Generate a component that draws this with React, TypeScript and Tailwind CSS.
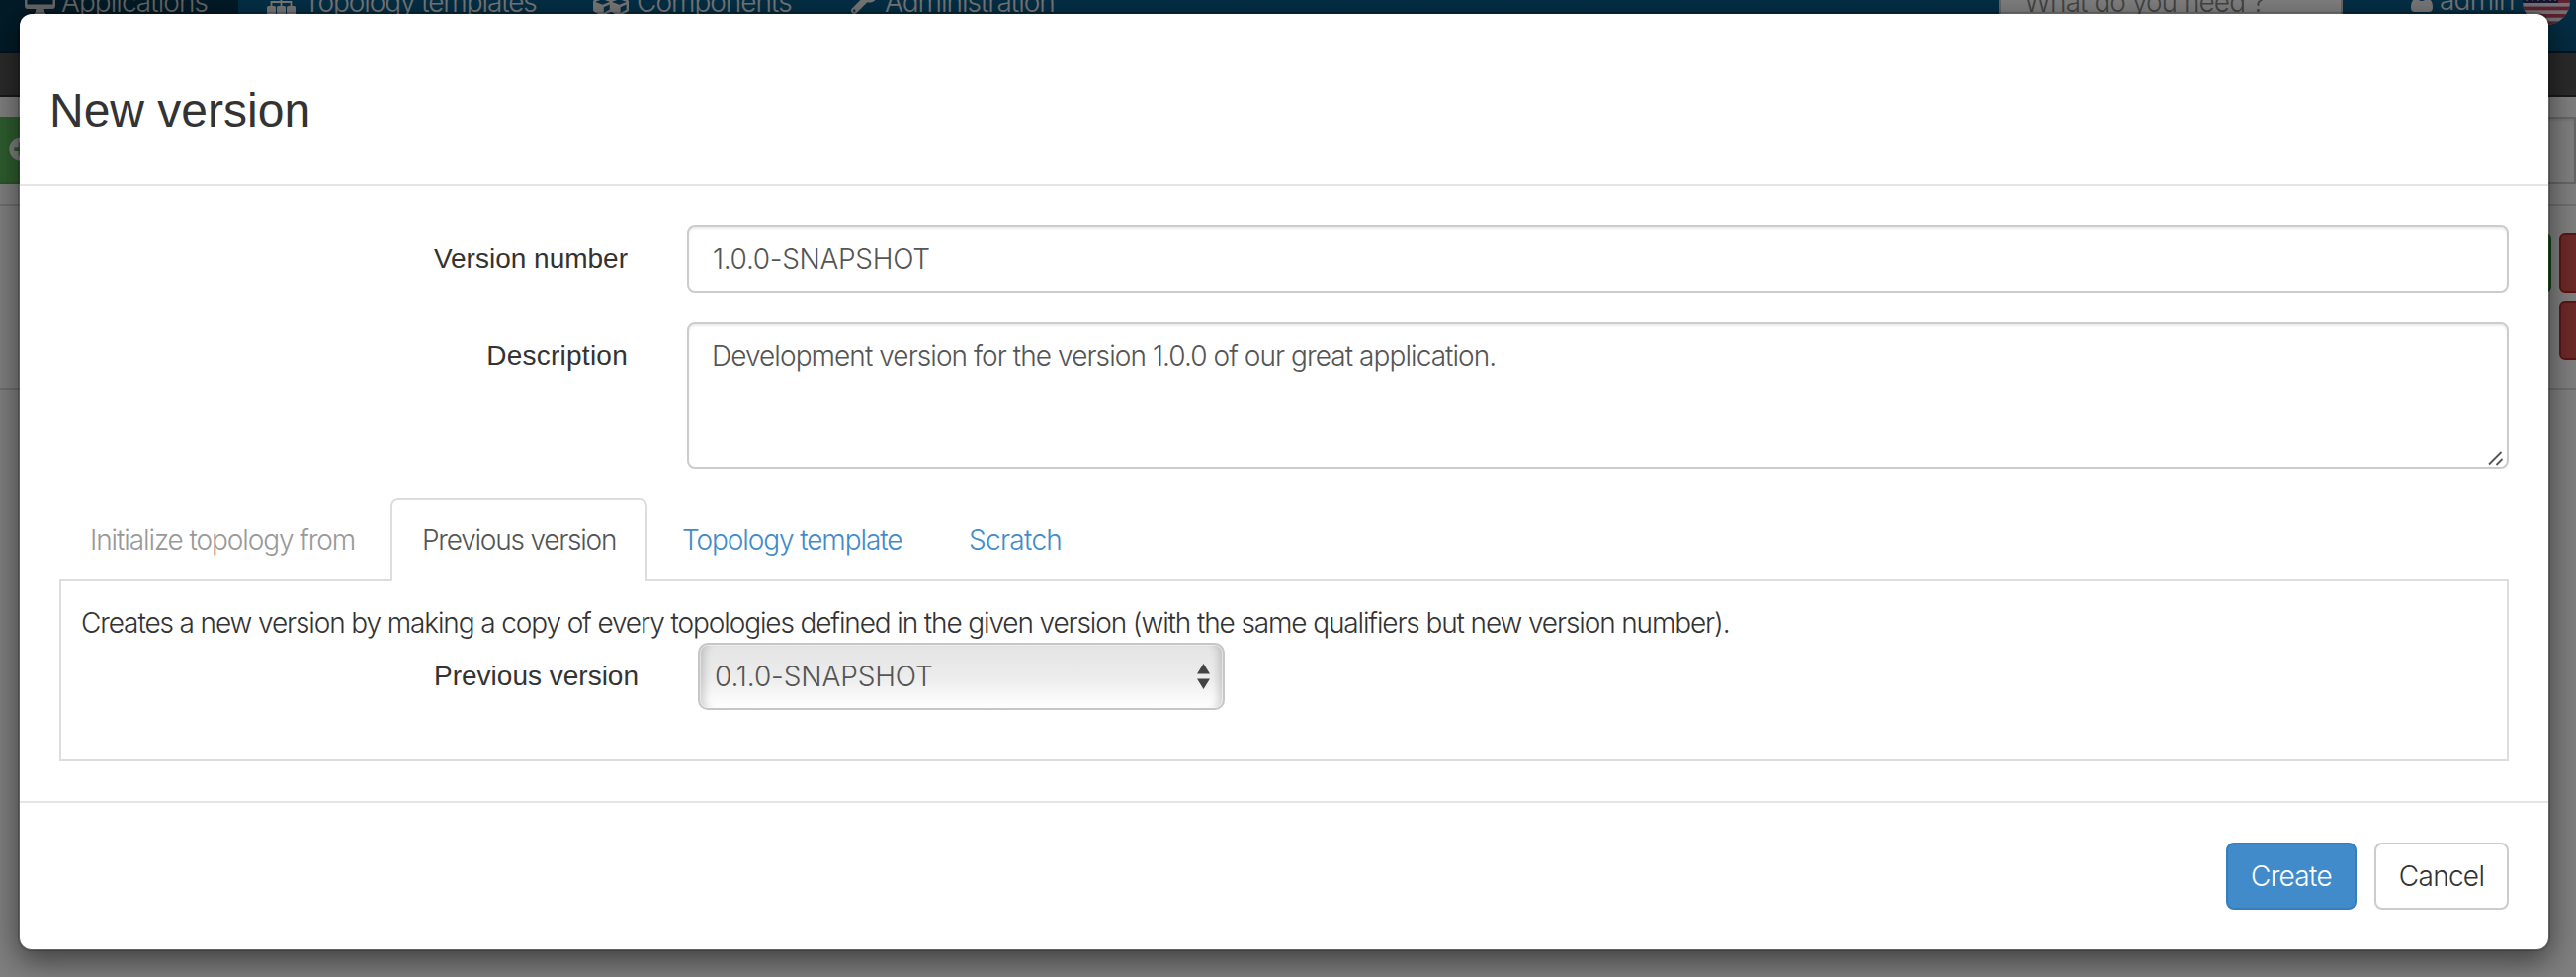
import { FaCubes, FaWrench, FaPlusCircle } from "react-icons/fa";
import type { ReactNode } from "react";

const light = "font-['Inter','Liberation_Sans',sans-serif] font-light";
const regular = "font-['Liberation_Sans',sans-serif]";

function DesktopIcon() {
  return (
    <svg className="mr-[6px] h-[36px] w-[31px]" viewBox="0 0 31 36" fill="currentColor">
      <path
        fillRule="evenodd"
        d="M3 2h25a3 3 0 0 1 3 3v17a3 3 0 0 1-3 3H3a3 3 0 0 1-3-3V5a3 3 0 0 1 3-3zM2.500 4.500v16h26v-16z"
      />
      <path d="M11.500 25h8l1 4 2 2h-14l2-2z" />
    </svg>
  );
}

function SitemapIcon() {
  return (
    <svg className="mr-[8px] h-[36px] w-[29px]" viewBox="0 0 29 36" fill="currentColor">
      <rect x="10" y="4" width="9" height="9" rx="1.500" />
      <rect x="0" y="22" width="9" height="9" rx="1.500" />
      <rect x="10" y="22" width="9" height="9" rx="1.500" />
      <rect x="20" y="22" width="9" height="9" rx="1.500" />
      <path d="M4.500 22v-4h20v4M14.500 12v10" fill="none" stroke="currentColor" strokeWidth="1.800" />
    </svg>
  );
}

function UserIcon() {
  return (
    <svg className="mr-[7px] -mt-[4px] h-[24px] w-[22px]" viewBox="0 0 22 24" fill="currentColor">
      <circle cx="11" cy="6" r="6" />
      <path d="M6 10.500Q0 11 0 19.500 0 24 4 24h14q4 0 4-4.500 0-8.500-6-9-5 5-10 0z" />
    </svg>
  );
}

function FlagIcon() {
  return (
    <svg className="-mt-[2px] ml-[8px] size-12" viewBox="0 0 48 48">
      <clipPath id="flag">
        <circle cx="24" cy="24" r="24" />
      </clipPath>
      <g clipPath="url(#flag)">
        <rect width="48" height="48" fill="#e6e6ee" />
        {[0, 7.4, 14.8, 22.2, 29.6, 37, 44.4].map((y) => (
          <rect key={y} y={y} width="48" height="3.700" fill="#c0405a" />
        ))}
        <rect width="36" height="26" fill="#2a2a60" />
        {[4, 10, 16, 22, 28, 33].map((x) => (
          <circle key={x} cx={x} cy="23" r="1" fill="#b0b0d0" />
        ))}
      </g>
    </svg>
  );
}

function Navbar() {
  return (
    <header
      className={`-mt-[48px] flex h-[102px] shrink-0 items-center whitespace-nowrap border-b-2 border-[#04283c] bg-linear-to-b from-[#0a6698] to-[#08557f] text-[28px] leading-10 tracking-[-1.1px] text-[#eeeeee] ${light}`}
    >
      <div className="flex h-full w-[241px] items-center bg-[#04364f] pl-[25px] tracking-[-0.95px] text-[#cccccc]">
        <DesktopIcon />
        <span>Applications</span>
      </div>
      <div className="flex w-[330px] items-center pl-[29px]">
        <SitemapIcon />
        <span>Topology templates</span>
      </div>
      <div className="flex w-[261px] items-center pl-[29px] tracking-[-1px]">
        <FaCubes className="-mt-[4px] mr-[8px] size-[36px]" />
        <span>Components</span>
      </div>
      <div className="flex items-center pl-[29px] tracking-[-1px]">
        <FaWrench className="-mt-[2px] mr-[8px] size-[26px]" />
        <span>Administration</span>
      </div>
      <div className="ml-auto flex h-[68px] w-[348px] items-center border-2 border-[#cccccc] bg-white px-[24px] tracking-[-0.95px] text-[#888888]">
        What do you need ?
      </div>
      <div className="ml-[69px] flex w-[167px] items-center">
        <UserIcon />
        <span className="-mt-[4px] tracking-[-0.8px]">admin</span>
        <FlagIcon />
      </div>
    </header>
  );
}

function Backdrop() {
  return (
    <div className={`flex h-full flex-col bg-white ${regular}`}>
      <Navbar />
      <div className="h-[44px] shrink-0 border-b-2 border-[#333333] bg-[#555555]" />
      <div className="flex h-[110px] shrink-0 items-center justify-between border-b-2 border-[#dddddd]">
        <div className="flex h-[68px] w-[120px] items-center border-b-2 border-[#4cae4c] bg-[#5cb85c] pl-[9px] text-white">
          <FaPlusCircle className="size-6" />
        </div>
        <div className="h-[68px] w-[300px] border-2 border-[#cccccc] shadow-[inset_0_2px_2px_rgba(0,0,0,0.075)]" />
      </div>
      <div className="flex h-[186px] shrink-0 justify-end gap-[8px] border-b-2 border-[#dddddd] pt-[28px]">
        <div className="h-[60px] w-[60px] rounded-[6px] border-2 border-[#398439] bg-[#449d44]" />
        <div className="-mr-[20px] flex flex-col gap-[8px]">
          <div className="h-[60px] w-[37px] rounded-[6px] border-2 border-[#b52b27] bg-[#d9534f]" />
          <div className="h-[60px] w-[37px] rounded-[6px] border-2 border-[#b52b27] bg-[#d9534f]" />
        </div>
      </div>
    </div>
  );
}

function Label({ children }: { children: ReactNode }) {
  return <label className={`pt-[14px] text-right tracking-normal text-[#333333] ${regular}`}>{children}</label>;
}

function Dialog() {
  return (
    <section
      className={`w-[2562px] rounded-[14px] border-2 border-black/20 bg-white bg-clip-padding text-[28px] leading-10 tracking-[-1.1px] shadow-[0_10px_30px_rgba(0,0,0,0.5)] ${light}`}
    >
      <header className="h-[174px] border-b-2 border-[#e5e5e5] pl-[30px] pt-[64px]">
        <h1 className={`text-[48px] leading-[68px] tracking-normal text-[#333333] ${regular}`}>New version</h1>
      </header>

      <div className="h-[624px] border-b-2 border-[#e5e5e5] px-[40px] pt-[40px]">
        <div className="grid grid-cols-[575px_1fr] gap-x-[60px] gap-y-[30px]">
          <Label>Version number</Label>
          <div className="h-[68px] rounded-[8px] border-2 border-[#cccccc] px-[24px] py-[12px] tracking-[-0.3px] text-[#555555] shadow-[inset_0_2px_2px_rgba(0,0,0,0.075)]">
            1.0.0-SNAPSHOT
          </div>
          <Label>
            <span className="tracking-[0.25px]">Description</span>
          </Label>
          <div className="relative h-[148px] rounded-[8px] border-2 border-[#cccccc] px-[23px] py-[12px] tracking-[-0.93px] text-[#555555] shadow-[inset_0_2px_2px_rgba(0,0,0,0.075)]">
            Development version for the version 1.0.0 of our great application.
            <svg
              className="absolute bottom-px right-[3px] size-[17px]"
              viewBox="0 0 17 17"
              fill="none"
              stroke="#555555"
              strokeWidth="1.800"
            >
              <path d="M2 15.500 14.500 3M9.500 16l6-6" />
            </svg>
          </div>
        </div>

        <nav className="mt-[30px] flex h-[84px] border-b-2 border-[#dddddd]">
          <span className="w-[335px] pl-[31px] pt-[22px] tracking-[-1.1px] text-[#999999]">Initialize topology from</span>
          <span className="h-[84px] w-[260px] rounded-t-[8px] border-2 border-b-0 border-[#dddddd] bg-white pl-[30px] pt-[20px] tracking-[-1.22px] text-[#555555]">
            Previous version
          </span>
          <span className="w-[290px] pl-[35px] pt-[22px] text-[#428bca]">Topology template</span>
          <span className="pl-[35px] pt-[22px] tracking-[-0.7px] text-[#428bca]">Scratch</span>
        </nav>
        <div className="h-[182px] border-2 border-t-0 border-[#dddddd] px-[20px] pt-[22px] text-[#333333]">
          <p className="tracking-[-1.12px]">
            Creates a new version by making a copy of every topologies defined in the given version (with the same qualifiers
            but new version number).
          </p>
          <div className="grid grid-cols-[564px_533px] gap-x-[60px]">
            <Label>Previous version</Label>
            <div className="flex h-[68px] items-center justify-between rounded-[10px] border-2 border-[#c6c6c6] bg-linear-to-b from-[#e4e4e4] via-[#ececec] to-white pl-[15px] pr-[13px] tracking-[-0.1px] text-[#555555] shadow-[inset_0_0_0_1px_rgba(255,255,255,0.5),inset_10px_0_8px_-6px_rgba(0,0,0,0.18),inset_-10px_0_8px_-6px_rgba(0,0,0,0.18)]">
              0.1.0-SNAPSHOT
              <svg width="13" height="26" viewBox="0 0 13 26" fill="#444444">
                <path d="M0 10.500 6.500 0 13 10.500zM0 15.500h13L6.500 26z" />
              </svg>
            </div>
          </div>
        </div>
      </div>

      <footer className="flex h-[148px] justify-end gap-[18px] px-[40px] pt-[40px] tracking-[-0.7px]">
        <button className="flex h-[68px] w-[132px] items-center justify-center rounded-[8px] border-2 border-[#357ebd] bg-[#428bca] text-white">
          Create
        </button>
        <button className="flex h-[68px] w-[136px] items-center justify-center rounded-[8px] border-2 border-[#cccccc] bg-white text-[#333333]">
          Cancel
        </button>
      </footer>
    </section>
  );
}

export default function App() {
  return (
    <main className="relative h-[988px] w-[2606px] overflow-hidden">
      <Backdrop />
      <div className="absolute inset-0 bg-black/50 pl-[18px] pt-[12px]">
        <Dialog />
      </div>
    </main>
  );
}
